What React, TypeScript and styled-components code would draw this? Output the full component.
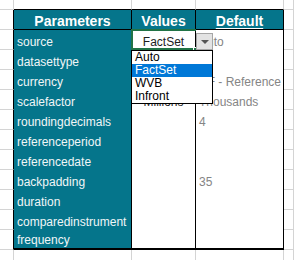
import React from 'react'
import styled, { createGlobalStyle, css } from 'styled-components'

const GlobalStyle = createGlobalStyle`
  html, body {
    margin: 0;
    padding: 0;
    background: #ffffff;
  }
  body {
    font-family: 'Liberation Sans', Arial, sans-serif;
  }
`

const GRID = '#d4d4d4'
const TEAL = '#05758b'

type Edge = 'grid' | 'black' | 'thick' | 'none'
type Kind = 'blank' | 'head' | 'param' | 'value' | 'default'

const edge = (e: Edge) => {
  if (e === 'grid') return `1px solid ${GRID}`
  if (e === 'black') return '1px solid #000'
  if (e === 'thick') return '2px solid #000'
  return '0'
}

const Sheet = styled.div`
  position: relative;
  display: grid;
  grid-template-columns: 14px 118px 64px 88px 10px;
  grid-template-rows: 10px repeat(12, 20px) 10px;
  width: 294px;
  height: 260px;
  overflow: hidden;
  background: #fff;
`

const Cell = styled.div<{ $kind: Kind; $right: Edge; $bottom: Edge; $underline?: boolean }>`
  box-sizing: border-box;
  display: flex;
  align-items: flex-end;
  white-space: nowrap;
  overflow: visible;
  min-width: 0;
  font-size: 12px;
  line-height: 14px;
  padding: 0 0 1px 3px;
  border-right: ${(p) => edge(p.$right)};
  border-bottom: ${(p) => edge(p.$bottom)};
  background: #fff;
  ${(p) =>
    p.$kind === 'head' &&
    css`
      background: ${TEAL};
      color: #fff;
      font-weight: bold;
      font-size: 14px;
      line-height: 16px;
      justify-content: center;
      padding: 0;
    `}
  ${(p) =>
    p.$kind === 'param' &&
    css`
      background: ${TEAL};
      color: #f1f6f7;
    `}
  ${(p) =>
    p.$kind === 'value' &&
    css`
      color: #1d1d1d;
      justify-content: center;
      padding: 0 0 1px 0;
    `}
  ${(p) =>
    p.$kind === 'default' &&
    css`
      color: #858585;
    `}
  ${(p) =>
    p.$underline &&
    css`
      text-decoration: underline;
      text-underline-offset: 2px;
    `}
`

const Selection = styled.div`
  position: absolute;
  left: 131px;
  top: 29px;
  width: 65px;
  height: 21px;
  box-sizing: border-box;
  border: 2px solid #217346;
  border-right: 0;
  pointer-events: none;
  z-index: 2;
`

const FillHandle = styled.div`
  position: absolute;
  left: 193px;
  top: 47px;
  width: 4px;
  height: 4px;
  background: #217346;
  border: 1px solid #fff;
  z-index: 3;
`

const DropButton = styled.div`
  position: absolute;
  left: 196px;
  top: 33px;
  width: 17px;
  height: 17px;
  box-sizing: border-box;
  background: #e3e3e3;
  border: 1px solid #a6a6a6;
  display: flex;
  align-items: center;
  justify-content: center;
  z-index: 4;
`

const Arrow = styled.span`
  width: 0;
  height: 0;
  border-left: 4px solid transparent;
  border-right: 4px solid transparent;
  border-top: 4px solid #555;
  margin-top: 1px;
`

const List = styled.div`
  position: absolute;
  left: 131px;
  top: 50px;
  width: 82px;
  height: 54px;
  box-sizing: border-box;
  background: #fff;
  border: 1px solid #000;
  z-index: 5;
  display: flex;
  flex-direction: column;
`

const Option = styled.div<{ $active?: boolean }>`
  height: 13px;
  line-height: 13px;
  font-size: 12px;
  padding-left: 3px;
  color: ${(p) => (p.$active ? '#fff' : '#000')};
  background: ${(p) => (p.$active ? '#0078d7' : 'transparent')};
`

const rows: [string, string, string][] = [
  ['source', 'FactSet', 'Auto'],
  ['datasettype', '', ''],
  ['currency', '', 'RF - Reference'],
  ['scalefactor', 'Millions', 'Thousands'],
  ['roundingdecimals', '', '4'],
  ['referenceperiod', '', ''],
  ['referencedate', '', ''],
  ['backpadding', '', '35'],
  ['duration', '', ''],
  ['comparedinstrument', '', ''],
  ['frequency', '', ''],
]

const options = ['Auto', 'FactSet', 'WVB', 'Infront']

const App = () => {
  return (
    <>
      <GlobalStyle />
      <Sheet>
        {/* row above the table */}
        <Cell $kind="blank" $right="grid" $bottom="grid" />
        <Cell $kind="blank" $right="grid" $bottom="black" />
        <Cell $kind="blank" $right="grid" $bottom="black" />
        <Cell $kind="blank" $right="grid" $bottom="black" />
        <Cell $kind="blank" $right="grid" $bottom="grid" />

        {/* header */}
        <Cell $kind="blank" $right="black" $bottom="grid" />
        <Cell $kind="head" $right="black" $bottom="black">Parameters</Cell>
        <Cell $kind="head" $right="black" $bottom="black">Values</Cell>
        <Cell $kind="head" $right="black" $bottom="black" $underline>Default</Cell>
        <Cell $kind="blank" $right="grid" $bottom="grid" />

        {rows.map(([name, value, def], i) => {
          const last = i === rows.length - 1
          const bottom: Edge = last ? 'thick' : 'none'
          return (
            <React.Fragment key={name}>
              <Cell $kind="blank" $right="black" $bottom="grid" />
              <Cell $kind="param" $right="black" $bottom={bottom}>{name}</Cell>
              <Cell $kind="value" $right="black" $bottom={bottom}>{value}</Cell>
              <Cell $kind="default" $right="black" $bottom={bottom}>{def}</Cell>
              <Cell $kind="blank" $right="grid" $bottom="grid" />
            </React.Fragment>
          )
        })}

        {/* row below the table */}
        <Cell $kind="blank" $right="grid" $bottom="none" />
        <Cell $kind="blank" $right="grid" $bottom="none" />
        <Cell $kind="blank" $right="grid" $bottom="none" />
        <Cell $kind="blank" $right="grid" $bottom="none" />
        <Cell $kind="blank" $right="grid" $bottom="none" />

        <Selection />
        <FillHandle />
        <DropButton>
          <Arrow />
        </DropButton>
        <List>
          {options.map((o) => (
            <Option key={o} $active={o === 'FactSet'}>{o}</Option>
          ))}
        </List>
      </Sheet>
    </>
  )
}

export default App
